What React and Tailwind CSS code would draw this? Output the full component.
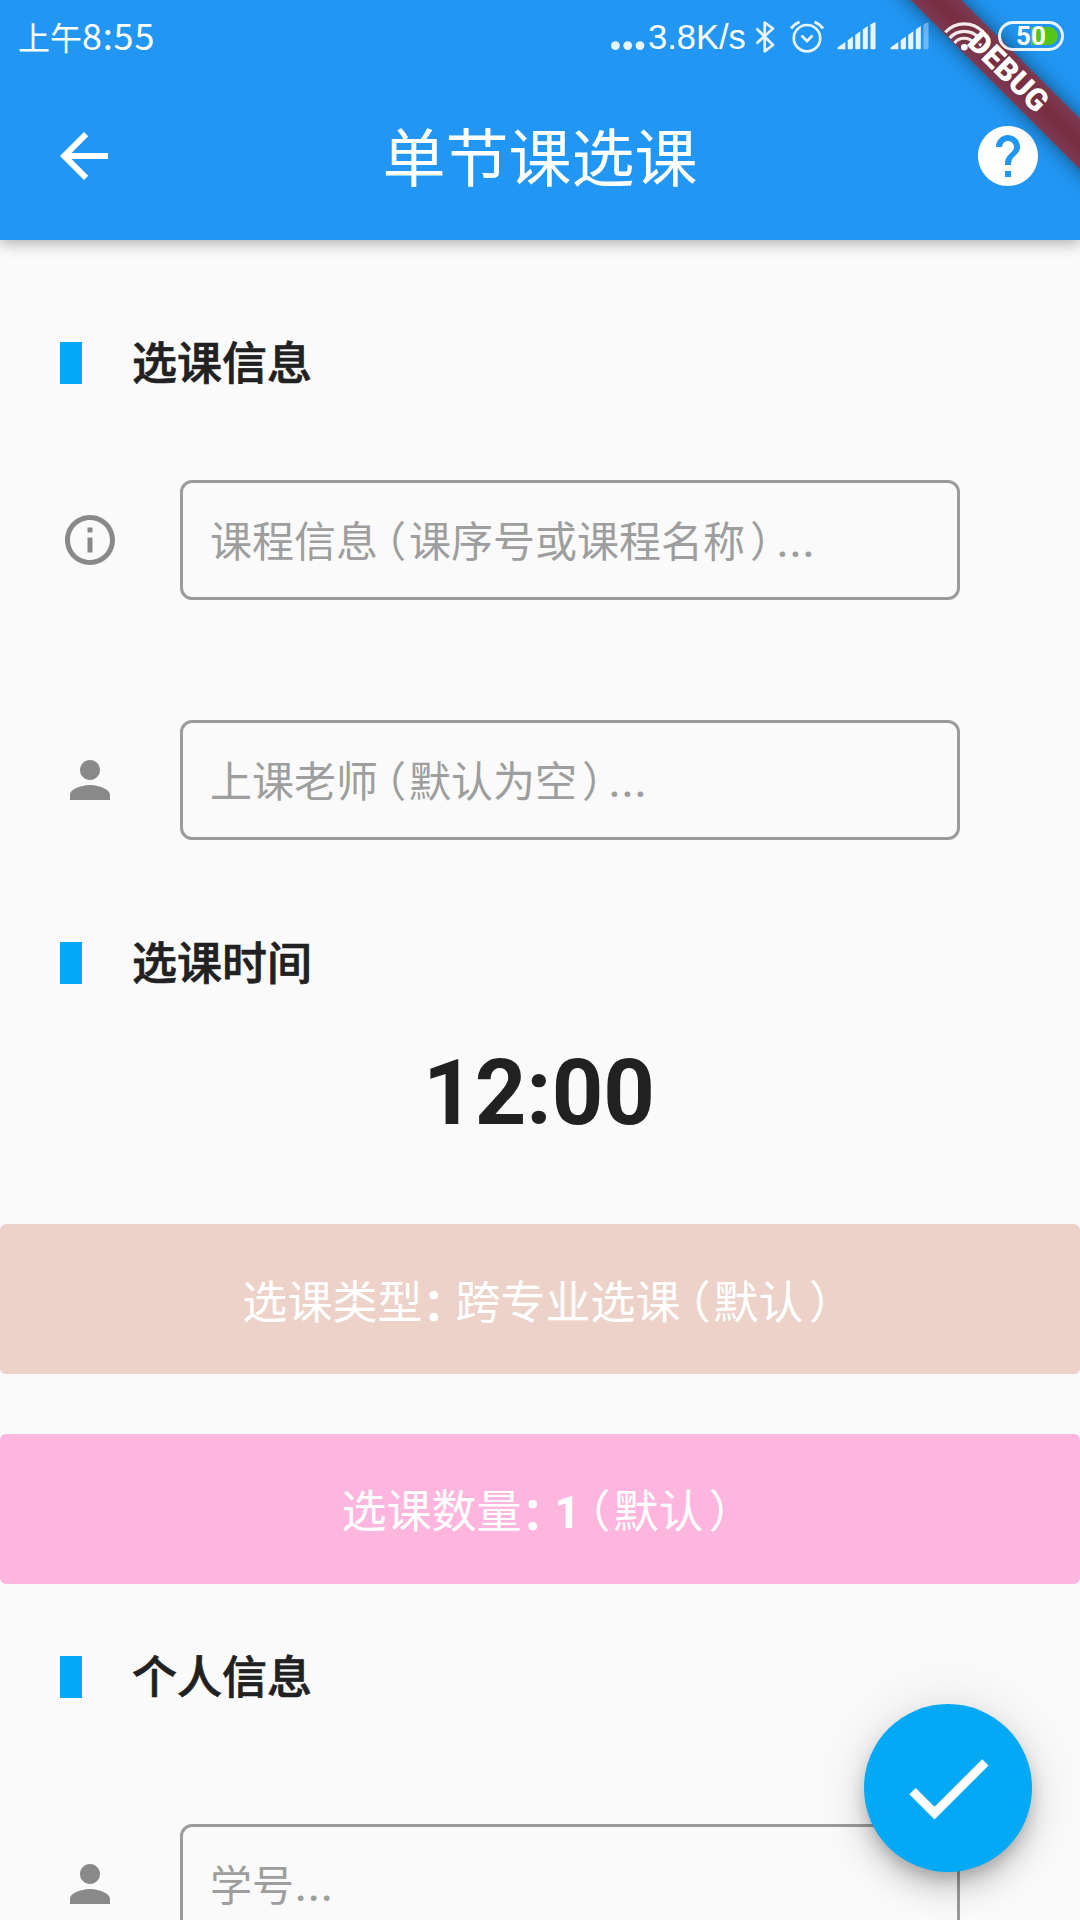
import React from "react";

const PATHS = {
  back: "M20 11H7.83l5.59-5.59L12 4l-8 8 8 8 1.41-1.41L7.83 13H20v-2z",
  help: "M12 2C6.48 2 2 6.48 2 12s4.48 10 10 10 10-4.48 10-10S17.52 2 12 2zm1 17h-2v-2h2v2zm2.07-7.75l-.9.92C13.45 12.9 13 13.5 13 15h-2v-.5c0-1.1.45-2.1 1.17-2.83l1.24-1.26c.37-.36.59-.86.59-1.41 0-1.1-.9-2-2-2s-2 .9-2 2H8c0-2.21 1.79-4 4-4s4 1.79 4 4c0 .88-.36 1.68-.93 2.25z",
  info: "M11 17h2v-6h-2v6zm1-15C6.48 2 2 6.48 2 12s4.48 10 10 10 10-4.48 10-10S17.52 2 12 2zm0 18c-4.41 0-8-3.59-8-8s3.59-8 8-8 8 3.59 8 8-3.59 8-8 8zM11 9h2V7h-2v2z",
  person: "M12 12c2.21 0 4-1.79 4-4s-1.79-4-4-4-4 1.79-4 4 1.79 4 4 4zm0 2c-2.67 0-8 1.34-8 4v2h16v-2c0-2.66-5.33-4-8-4z",
  check: "M9 16.17L4.83 12l-1.42 1.41L9 19 21 7l-1.41-1.41z",
};

function Icon({ name, className }) {
  return (
    <svg viewBox="0 0 24 24" fill="currentColor" className={className}>
      <path d={PATHS[name]} />
    </svg>
  );
}

// Full-width punctuation set tighter than a whole em.
const PUNCTUATION = {
  "（": "inline-block w-[1em] -ml-[0.33em] mr-[0.064em]",
  "）": "inline-block w-[1em] ml-[0.12em] -mr-[0.386em]",
  "：": "inline-block w-[1em] font-medium translate-y-[0.04em] -mr-[0.266em] [-webkit-text-stroke:0.8px_white]",
};

function Text({ children }) {
  return (
    <span className="whitespace-nowrap">
      {[...children].map((ch, i) => {
        if (ch === "…")
          return (
            <span key={i} className="ml-[1px] font-['Roboto'] font-medium tracking-[0.03em]">
              ...
            </span>
          );
        if (ch === "1")
          return (
            <span key={i} className="font-['Roboto'] font-bold">
              1
            </span>
          );
        return (
          <span key={i} className={PUNCTUATION[ch]}>
            {ch}
          </span>
        );
      })}
    </span>
  );
}

function Section({ title }) {
  return (
    <div className="flex h-[66px] items-center pl-[60px]">
      <div className="h-[42px] w-[22px] bg-[#03a9f4]" />
      <h2 className="ml-[50px] pb-[4px] text-[45px] leading-[62px] font-medium text-[#212121] [-webkit-text-stroke:0.7px_#212121]">
        {title}
      </h2>
    </div>
  );
}

function Field({ icon, hint }) {
  return (
    <div className="flex h-[120px] items-center pl-[60px]">
      <Icon name={icon} className="size-[60px] text-[#898989]" />
      <div className="ml-[60px] flex h-[120px] w-[780px] items-center rounded-[12px] border-[3px] border-[#9b9b9b] pt-[1px] pl-[27px] text-[42px] leading-[60px] text-[#9e9e9e]">
        <Text>{hint}</Text>
      </div>
    </div>
  );
}

function Signal({ weak }) {
  return (
    <svg viewBox="0 0 39 28" className="h-[28px] w-[39px]" fill="#fff" fillOpacity="0.9">
      <path d="M0.5 25.5L8.3 20V27.3H1Q0 27.3 0.5 25.5z" />
      <path d="M10.7 18.2L15.9 14.5V26.5L15 27.3H11.5L10.7 26.5z" />
      <path d="M18.2 13L23.3 9.3V26.5L22.5 27.3H19L18.2 26.5z" />
      <path d="M25.8 7.5L30.8 4V26.5L30 27.3H26.6L25.8 26.5z" />
      <path d="M33.5 2.2L38.5 0V26.5L37.7 27.3H34.3L33.5 26.5z" fillOpacity={weak ? 0.35 : 0.9} />
    </svg>
  );
}

function StatusBar() {
  return (
    <div className="relative z-20 flex h-[72px] items-start text-white">
      <div className="flex items-baseline pt-[8px] pl-[18px] leading-[52px]">
        <span className="text-[32px]">上午</span>
        <span className="text-[36px] tracking-[0.8px]">8:55</span>
      </div>
      <div className="ml-auto flex h-[72px] items-start">
        <svg viewBox="0 0 34 10" className="mt-[41px] h-[10px] w-[34px]" fill="#fff" fillOpacity="0.9">
          <circle cx="4.4" cy="4.6" r="4.4" />
          <circle cx="16.7" cy="4.6" r="4.4" />
          <circle cx="29" cy="4.6" r="4.4" />
        </svg>
        <span className="ml-[3px] w-[101px] pt-[16px] font-['Liberation_Sans'] text-[34.5px] leading-[42px] whitespace-nowrap">
          3.8K/s
        </span>
        <svg viewBox="0 0 22 34" className="mt-[20px] ml-[6px] h-[34px] w-[22px]" fill="none" stroke="#fff" strokeOpacity="0.9" strokeWidth="2.7">
          <path d="M1.5 8.5L18 25L9.7 31.3V2.7L18 8.5L1.5 23.5" strokeLinejoin="round" />
        </svg>
        <svg viewBox="0 0 34 34" className="mt-[20px] ml-[13px] h-[34px] w-[34px]" fill="none" stroke="#fff" strokeOpacity="0.9" strokeWidth="2.7">
          <circle cx="17" cy="18.2" r="13.2" />
          <path d="M11.5 15.5l5.5 5.5 5.5-5.5" />
          <path d="M1 8.5Q4 4 9.5 1.8M33 8.5Q30 4 24.5 1.8" strokeWidth="3" />
        </svg>
        <div className="mt-[21.7px] ml-[13px]">
          <Signal />
        </div>
        <div className="mt-[21.7px] ml-[14px]">
          <Signal weak />
        </div>
        <svg viewBox="0 0 42 30" className="mt-[20.5px] ml-[14px] h-[30px] w-[42px]" fill="none" stroke="#fff" strokeOpacity="0.9" strokeWidth="3.2">
          <path d="M2.3 11.3A25.5 25.5 0 0 1 40.3 11.3" />
          <path d="M6.7 17A19.5 19.5 0 0 1 36 17" />
          <path d="M11.5 22A12.4 12.4 0 0 1 31 22" />
          <circle cx="21.3" cy="26.3" r="3.3" fill="#fff" stroke="none" />
          <path d="M35 22.5l2.2 3.5 2.2-3.5z" fill="#fff" stroke="none" />
        </svg>
        <div className="mt-[21px] mr-[16px] ml-[13px] flex h-[30px] w-[66px] items-center justify-center rounded-full border-[3px] border-white/90 p-[3px] font-['Roboto'] text-[26px] leading-none font-bold">
          <div className="flex h-full w-full items-center justify-center rounded-full bg-[linear-gradient(90deg,transparent_50%,#55c41b_50%)]">
            50
          </div>
        </div>
      </div>
    </div>
  );
}

function DebugBanner() {
  return (
    <div className="absolute top-0 right-0 z-10 h-[240px] w-[240px] overflow-hidden">
      <div className="absolute top-[54px] left-[18px] h-[36px] w-[300px] rotate-45">
        <div className="absolute inset-0 bg-black/50 blur-[10px]" />
        <div className="absolute inset-0 flex items-center justify-center bg-[#b71c1ca0] font-['Roboto'] text-[31px] leading-[36px] font-black text-white">
          DEBUG
        </div>
      </div>
    </div>
  );
}

export default function App() {
  return (
    <div className="relative flex h-[1920px] w-[1080px] flex-col overflow-hidden bg-[#fafafa] font-['Noto_Sans_CJK_SC',sans-serif]">
      <header className="relative h-[240px] shrink-0 bg-[#2196f3] shadow-[0_3px_12px_rgba(0,0,0,0.18),0_6px_15px_rgba(0,0,0,0.12)]">
        <StatusBar />
        <DebugBanner />
        <div className="grid h-[168px] grid-cols-[84px_1fr_84px] items-center px-[36px] text-white">
          <Icon name="back" className="ml-[12px] size-[72px]" />
          <h1 className="pb-[5px] text-center text-[63px] leading-[90px] font-normal">单节课选课</h1>
          <Icon name="help" className="ml-[12px] size-[72px]" />
        </div>
      </header>

      <main className="flex flex-col">
        <div className="mt-[90px]">
          <Section title="选课信息" />
        </div>
        <div className="mt-[84px] flex flex-col gap-[120px]">
          <Field icon="info" hint="课程信息（课序号或课程名称）…" />
          <Field icon="person" hint="上课老师（默认为空）…" />
        </div>
        <div className="mt-[90px]">
          <Section title="选课时间" />
        </div>
        <div className="mt-[45px] flex h-[106px] items-center justify-center pr-[2px] font-['Roboto'] text-[90px] leading-[106px] font-bold text-[#212121]">
          12:00
        </div>
        <button className="mt-[77px] flex h-[150px] items-center justify-center rounded-[6px] bg-[#edd2c9] pt-[1px] pr-[1px] text-[45px] text-white">
          <Text>选课类型：跨专业选课（默认）</Text>
        </button>
        <button className="mt-[60px] flex h-[150px] items-center justify-center rounded-[6px] bg-[#ffb6de] pt-[4px] pr-[2px] text-[45px] text-white">
          <Text>选课数量：1（默认）</Text>
        </button>
        <div className="mt-[60px]">
          <Section title="个人信息" />
        </div>
        <div className="mt-[114px]">
          <Field icon="person" hint="学号…" />
        </div>
      </main>

      <button className="absolute right-[48px] bottom-[48px] flex size-[168px] items-center justify-center rounded-full bg-[#03a9f4] text-white shadow-[0_9px_15px_-3px_rgba(0,0,0,0.2),0_18px_30px_rgba(0,0,0,0.14),0_3px_54px_rgba(0,0,0,0.12)]">
        <Icon name="check" className="size-[108px]" />
      </button>
    </div>
  );
}
